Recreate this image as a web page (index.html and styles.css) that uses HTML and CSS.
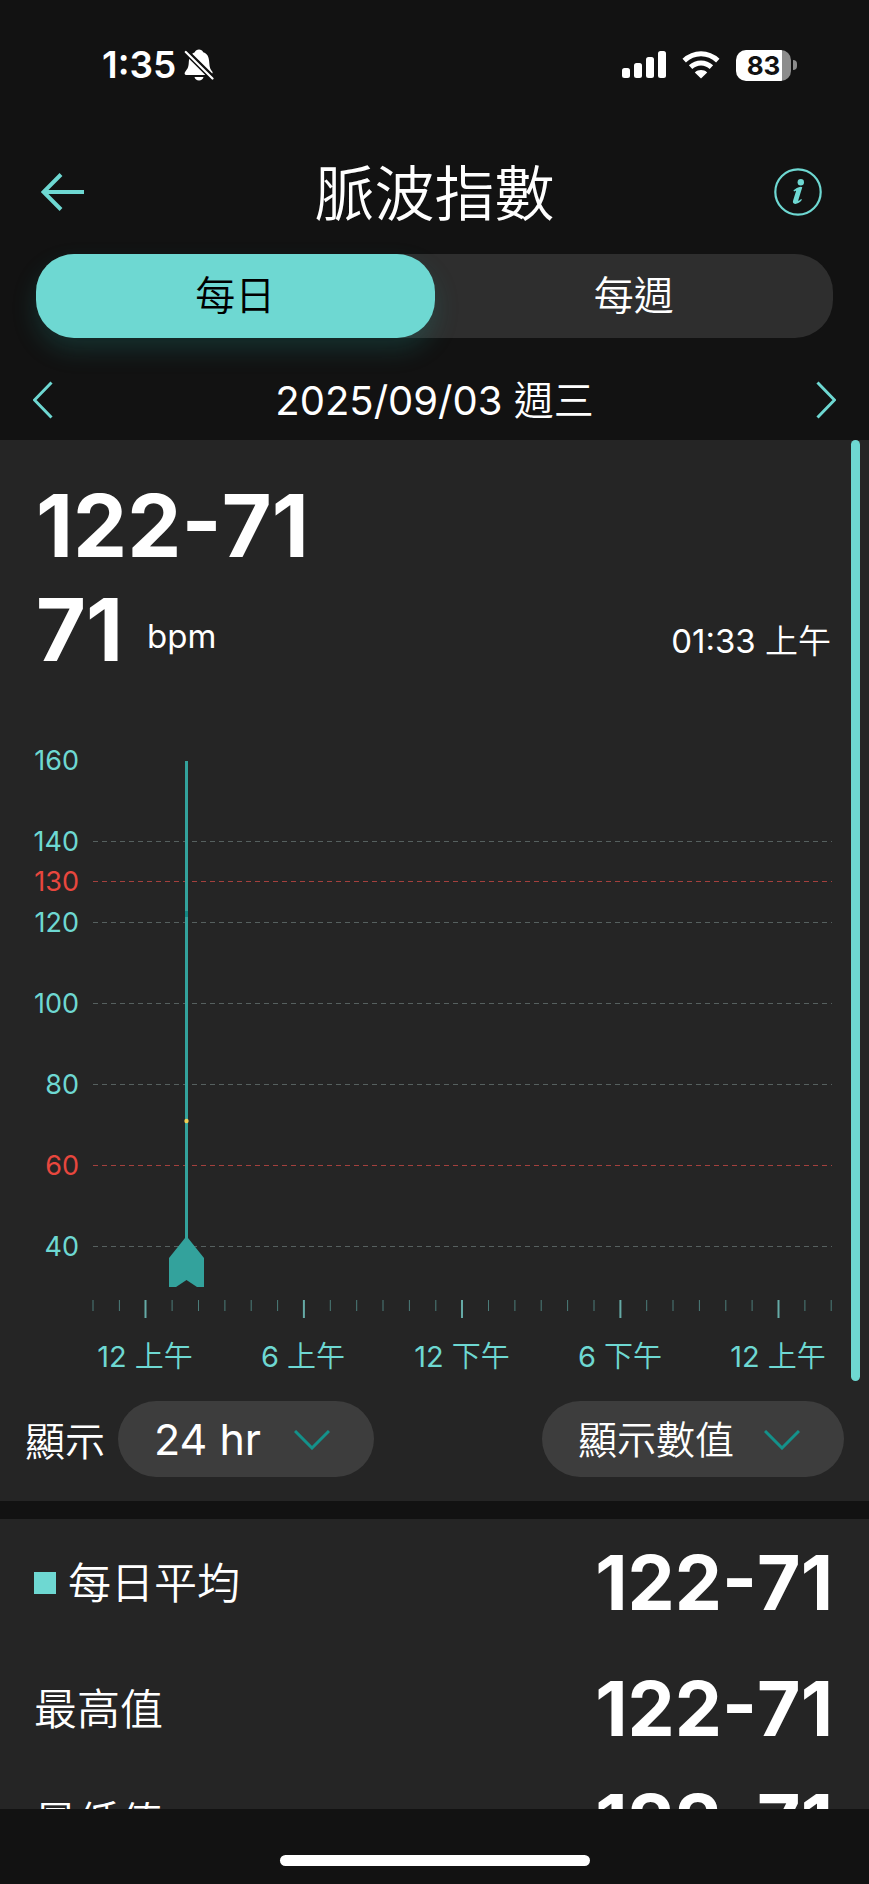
FILE: index.html
```html
<!DOCTYPE html>
<html lang="zh-Hant">
<head>
<meta charset="utf-8">
<meta name="viewport" content="width=device-width, initial-scale=1">
<title>脈波指數</title>
<link rel="stylesheet" href="styles.css">
</head>
<body>
<div class="app">
  <div class="status">
    <div class="status-left">
      <span class="clock">1:35</span>
      <svg class="bell" viewBox="0 0 30 32" aria-hidden="true">
        <path fill="#fff" d="M15 0.500C13 0.500 11.500 1.500 10.800 3.200C9.800 3.600 8.900 4.100 8.200 4.800L28.200 24.500C28.800 24 28.700 23 28.200 22.500C26.500 20.500 25.500 18.500 25.300 14C25.100 7.500 23 4.300 19.200 3.200C18.500 1.500 17 .500 15 .500Z"/>
        <path fill="#fff" d="M5.300 9.500C4.900 11 4.800 12.700 4.700 14.500C4.400 19 3 20.500 1.200 22.700C.100 24.200.500 26 2.400 26H21.500Z"/>
        <path fill="#fff" d="M10.500 28H19.500C19 30.200 17.300 31.600 15 31.600S11 30.200 10.500 28Z"/>
        <path stroke="#121212" stroke-width="5" d="M1.800 3L28.500 29.500"/>
        <path stroke="#fff" stroke-width="2.200" stroke-linecap="round" d="M1.800 3L28.500 29.500"/>
      </svg>
    </div>
    <div class="status-right">
      <svg class="signal" viewBox="0 0 44 28" aria-hidden="true">
        <g fill="#fff"><rect x="0" y="17" width="8" height="10" rx="2.500"/><rect x="12" y="12" width="8" height="15" rx="2.500"/><rect x="24" y="6" width="8" height="21" rx="2.500"/><rect x="36" y="0" width="8" height="27" rx="2.500"/></g>
      </svg>
      <svg class="wifi" viewBox="0 0 38 28" aria-hidden="true">
        <g fill="none" stroke="#fff" stroke-width="5"><path d="M2.200 9.600C12 0.400 26 0.400 35.800 9.600"/><path d="M8.600 16.200C14.600 10.600 23.400 10.600 29.400 16.200"/></g>
        <path fill="#fff" d="M19 27.600L12.800 21.400C16.300 18.300 21.700 18.300 25.200 21.400Z"/>
      </svg>
      <div class="battery"><span class="battery-body">83</span><span class="battery-tip"></span></div>
    </div>
  </div>

  <header class="header">
    <button class="icon-btn" aria-label="返回">
      <svg class="arrow" viewBox="0 0 44 38"><path d="M43 19H2M20 1.500L2.500 19L20 36.500"/></svg>
    </button>
    <h1 class="title">脈波指數</h1>
    <button class="icon-btn" aria-label="資訊">
      <svg class="info" viewBox="0 0 48 48">
        <circle cx="24" cy="24" r="22.700" fill="none" stroke="#6ed8d2" stroke-width="2.200"/>
        <circle cx="26.800" cy="14.200" r="3.200" fill="#6ed8d2"/>
        <path fill="#6ed8d2" d="M19.400 22.600C21.300 20.500 24.200 18.900 26.800 18.700L28.300 19.300L24.200 32.500C24.200 33.300 25.800 32.500 27 31L28 31.800C26.200 34.200 23.600 35.900 21.200 35.900C19 35.900 18.500 34.500 19.100 32.600L22 23.300C22.200 22.300 21.300 22.700 20.200 23.600Z"/>
      </svg>
    </button>
  </header>

  <div class="tabs" role="tablist">
    <button class="tab tab-active" role="tab" aria-selected="true">每日</button>
    <button class="tab" role="tab" aria-selected="false">每週</button>
  </div>

  <div class="date-nav">
    <button class="icon-btn" aria-label="前一天"><svg class="chev" viewBox="0 0 20 38"><path d="M18.500 1.500L1.500 19L18.500 36.500"/></svg></button>
    <span class="date"><span class="num">2025/09/03</span> 週三</span>
    <button class="icon-btn" aria-label="後一天"><svg class="chev" viewBox="0 0 20 38"><path d="M1.500 1.500L18.500 19L1.500 36.500"/></svg></button>
  </div>

  <main class="content">
    <section class="panel">
      <div class="scrollbar"></div>
      <div class="reading">
        <div class="big">122-71</div>
        <div class="pulse">
          <span class="big">71</span><span class="unit">bpm</span>
          <span class="time"><span class="num">01:33</span> 上午</span>
        </div>
      </div>
      <svg class="chart" viewBox="0 0 869 641" role="img" aria-label="脈波圖">
        <g class="y-labels">
          <text x="79" y="31">160</text><text x="79" y="112">140</text>
          <text x="79" y="152" class="limit">130</text><text x="79" y="193">120</text>
          <text x="79" y="274">100</text><text x="79" y="355">80</text>
          <text x="79" y="436" class="limit">60</text><text x="79" y="517">40</text>
        </g>
        <g class="grid">
          <path d="M93 102.500H832M93 183.500H832M93 264.500H832M93 345.500H832M93 507.500H832"/>
          <path class="grid-limit" d="M93 142.500H832M93 426.500H832"/>
        </g>
        <path class="ticks" d="M93 561v11M119.400 561v11M172.100 561v11M198.500 561v11M224.900 561v11M251.200 561v11M277.600 561v11M330.300 561v11M356.700 561v11M383 561v11M409.400 561v11M435.800 561v11M488.500 561v11M514.900 561v11M541.200 561v11M567.600 561v11M594 561v11M646.700 561v11M673 561v11M699.400 561v11M725.800 561v11M752.100 561v11M804.900 561v11M831.200 561v11"/>
        <path class="ticks-major" d="M145.500 561v18M303.900 561v18M462 561v18M620.400 561v18M778.500 561v18"/>
        <g class="x-labels">
          <text x="145" y="628"><tspan class="num">12</tspan> 上午</text>
          <text x="303" y="628"><tspan class="num">6</tspan> 上午</text>
          <text x="462" y="628"><tspan class="num">12</tspan> 下午</text>
          <text x="620" y="628"><tspan class="num">6</tspan> 下午</text>
          <text x="778" y="628"><tspan class="num">12</tspan> 上午</text>
        </g>
        <path fill="#33a29c" d="M185 22h3v477l16 20v29h-7L186.500 541L176 548H169V519L185 499Z"/>
        <rect x="185" y="172" width="3" height="6" fill="#138783"/>
        <circle cx="186.500" cy="382" r="2.200" fill="#f0cf55"/>
      </svg>
      <div class="filters">
        <label class="filter-label" for="range">顯示</label>
        <div class="picker picker-range">
          <select id="range"><option>24 hr</option></select>
          <svg class="down" viewBox="0 0 36 20"><path d="M1 1L18 18L35 1"/></svg>
        </div>
        <div class="picker picker-value">
          <select aria-label="顯示數值"><option>顯示數值</option></select>
          <svg class="down" viewBox="0 0 36 20"><path d="M1 1L18 18L35 1"/></svg>
        </div>
      </div>
    </section>

    <section class="summary">
      <div class="row"><span class="swatch"></span><span class="name">每日平均</span><span class="value">122-71</span></div>
      <div class="row"><span class="name">最高值</span><span class="value">122-71</span></div>
      <div class="row row-compact"><span class="name">最低值</span><span class="value">122-71</span></div>
    </section>
  </main>

  <footer class="home"><span class="home-bar"></span></footer>
</div>
</body>
</html>
```

FILE: styles.css
```css
* { box-sizing: border-box; }
body {
  margin: 0;
  background: #121212;
  color: #fff;
  font-family: Inter, "Noto Sans CJK TC", sans-serif;
  font-weight: 350;
}
button, select { font: inherit; color: inherit; border: 0; padding: 0; background: none; }
svg { display: block; }
.num { font-weight: 400; }
.app { height: 100vh; display: flex; flex-direction: column; overflow: hidden; }

.status {
  height: 130px;
  padding: 0 72px 0 102px;
  display: flex;
  align-items: center;
  justify-content: space-between;
}
.status-left, .status-right { display: flex; align-items: center; }
.status-left { gap: 8px; }
.status-right { gap: 16px; }
.clock { font-size: 37px; font-weight: 600; line-height: 44px; }
.bell { width: 30px; height: 32px; }
.signal { width: 44px; height: 28px; }
.wifi { width: 38px; height: 28px; }
.battery { display: flex; align-items: center; gap: 2px; }
.battery-body {
  width: 55px;
  height: 31px;
  border-radius: 10px;
  background: linear-gradient(to right, #fff 83%, #8c8c8c 83%);
  color: #121212;
  font-size: 26px;
  font-weight: 700;
  line-height: 31px;
  text-align: center;
}
.battery-tip { width: 4px; height: 10px; border-radius: 0 4px 4px 0; background: #8c8c8c; }

.header {
  height: 124px;
  padding: 0 47px 0 41px;
  display: grid;
  grid-template-columns: 54px 1fr 48px;
  align-items: center;
}
.title { margin: 0; padding-top: 4px; font-size: 60px; font-weight: 350; line-height: 80px; text-align: center; }
.arrow, .chev, .down { fill: none; stroke: #6ed8d2; stroke-width: 3; }
.arrow { width: 44px; height: 38px; stroke-width: 4; }
.info { width: 48px; height: 48px; }

.tabs {
  margin: 0 36px;
  height: 84px;
  display: grid;
  grid-template-columns: 1fr 1fr;
  border-radius: 38px;
  background: #2e2e2e;
}
.tab { border-radius: 38px; font-size: 40px; line-height: 60px; }
.tab-active {
  background: #6ed8d2;
  color: #000;
  box-shadow: 0 12px 24px rgba(30, 150, 140, 0.22);
}

.date-nav {
  height: 102px;
  padding: 22px 33px 0;
  display: flex;
  align-items: center;
  justify-content: space-between;
}
.date { font-size: 40px; line-height: 60px; padding-top: 2px; }
.chev { width: 20px; height: 38px; }

.content { flex: 1; min-height: 0; overflow: hidden; }
.panel { position: relative; background: #252525; padding: 34px 0 24px; }
.scrollbar {
  position: absolute;
  top: 0;
  right: 9px;
  bottom: 120px;
  width: 9px;
  border-radius: 5px;
  background: #6ed8d2;
}
.reading { padding: 0 38px 0 36px; }
.big, .value { font-weight: 700; font-kerning: none; font-variation-settings: "opsz" 14; }
.big { font-size: 86px; line-height: 104px; }
.pulse { display: flex; align-items: flex-end; }
.unit, .time { font-size: 33px; line-height: 48px; }
.unit { margin: 0 0 22px 24px; font-weight: 400; }
.time { margin: 0 0 17px auto; }
.chart { width: 100%; margin-top: 57px; }
.y-labels, .x-labels { fill: #6ed8d2; }
.y-labels { text-anchor: end; font-size: 27px; font-weight: 400; }
.x-labels { text-anchor: middle; font-size: 29px; }
.y-labels .limit { fill: #e8473e; }
.grid { fill: none; stroke: #56605f; stroke-width: 1; stroke-dasharray: 5 4; }
.grid-limit { stroke: #a4403d; }
.ticks { stroke: #4c7d7a; stroke-width: 1; }
.ticks-major { stroke: #65aaa6; stroke-width: 2; }

.filters { display: flex; align-items: center; padding: 0 25px; margin-top: 21px; font-size: 39px; }
.filter-label { font-size: 40px; margin-right: 13px; }
.picker { display: grid; align-items: center; border-radius: 39px; background: #3d3d3d; }
.picker select {
  grid-area: 1 / 1;
  appearance: none;
  width: 100%;
  height: 76px;
  padding: 0 36px;
  border-radius: 39px;
}
.picker .down { grid-area: 1 / 1; justify-self: end; margin: 2px 44px 0 0; pointer-events: none; }
.picker-range { width: 256px; }
.picker-range select { font-size: 43px; font-weight: 400; }
.picker-value { width: 302px; margin-left: auto; }
.down { width: 36px; height: 20px; stroke: #14918a; }

.summary { margin-top: 18px; background: #252525; }
.row {
  height: 126px;
  padding: 2px 36px 0 34px;
  display: flex;
  align-items: center;
}
.row-compact { height: 100px; }
.swatch { width: 22px; height: 22px; margin-right: 12px; background: #6ed8d2; }
.name { font-size: 43px; line-height: 64px; }
.value { margin-left: auto; font-size: 75px; line-height: 90px; }

.home { height: 75px; flex: none; padding-top: 46px; background: #121212; }
.home-bar { display: block; width: 310px; height: 11px; margin: 0 auto; border-radius: 6px; background: #fff; }
```
